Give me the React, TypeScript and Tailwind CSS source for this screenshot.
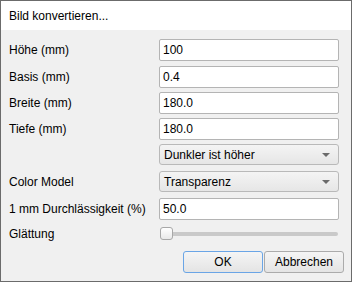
import React from 'react'

const FONT = { fontFamily: '"Liberation Sans", Arial, sans-serif' }

function TextRow({ label, value, h }: { label: string; value: string; h: string }) {
  return (
    <div className={`flex items-start ${h}`}>
      <div className="flex h-[22px] w-[150px] items-center text-[12px] text-black">{label}</div>
      <div className="flex h-[22px] w-[180px] items-center rounded-[2px] border border-[#b4b4b4] bg-white pl-[3px] text-[12px] text-black">
        {value}
      </div>
    </div>
  )
}

function ComboRow({ label, value, h }: { label: string; value: string; h: string }) {
  return (
    <div className={`flex items-start ${h}`}>
      <div className="flex h-[21px] w-[150px] items-center text-[12px] text-black">{label}</div>
      <div className="flex h-[21px] w-[180px] items-center justify-between rounded-[3px] border border-[#b9b9b9] bg-gradient-to-b from-[#f4f4f4] to-[#e6e6e6] pl-[4px] pr-[8px] text-[12px] text-black">
        <span>{value}</span>
        <span className="h-0 w-0 border-x-[4px] border-t-[4px] border-x-transparent border-t-[#6a6a6a]" />
      </div>
    </div>
  )
}

export default function App() {
  return (
    <div
      className="flex h-[282px] w-[352px] flex-col border border-[#6b6b6b] bg-[#f0f0f0]"
      style={FONT}
    >
      <div className="flex h-[29px] items-center bg-white pl-[8px] text-[12px] text-black">
        Bild konvertieren...
      </div>
      <div className="flex flex-col pl-[8px] pt-[9px]">
        <TextRow label="Höhe (mm)" value="100" h="h-[27px]" />
        <TextRow label="Basis (mm)" value="0.4" h="h-[26px]" />
        <TextRow label="Breite (mm)" value="180.0" h="h-[26px]" />
        <TextRow label="Tiefe (mm)" value="180.0" h="h-[26px]" />
        <ComboRow label="" value="Dunkler ist höher" h="h-[27px]" />
        <ComboRow label="Color Model" value="Transparenz" h="h-[27px]" />
        <TextRow label="1 mm Durchlässigkeit (%)" value="50.0" h="h-[29px]" />
        <div className="flex h-[24px] items-start">
          <div className="flex h-[13px] w-[150px] items-center text-[12px] text-black">Glättung</div>
          <div className="relative flex h-[13px] w-[180px] items-center">
            <div className="ml-[1px] h-[4px] w-[178px] rounded-full bg-[#c9c9c9]" />
            <div className="absolute left-[1px] top-0 h-[13px] w-[13px] rounded-[3px] border border-[#a8a8a8] bg-gradient-to-b from-white to-[#e9e9e9]" />
          </div>
        </div>
        <div className="flex pl-[174px]">
          <button className="h-[22px] w-[80px] rounded-[3px] border border-[#6aa5e6] bg-gradient-to-b from-[#f5f5f5] to-[#e4e4e4] text-[12px] text-black">
            OK
          </button>
          <button className="ml-[1px] h-[22px] w-[80px] rounded-[3px] border border-[#ababab] bg-gradient-to-b from-[#f5f5f5] to-[#e4e4e4] text-[12px] text-black">
            Abbrechen
          </button>
        </div>
      </div>
    </div>
  )
}
